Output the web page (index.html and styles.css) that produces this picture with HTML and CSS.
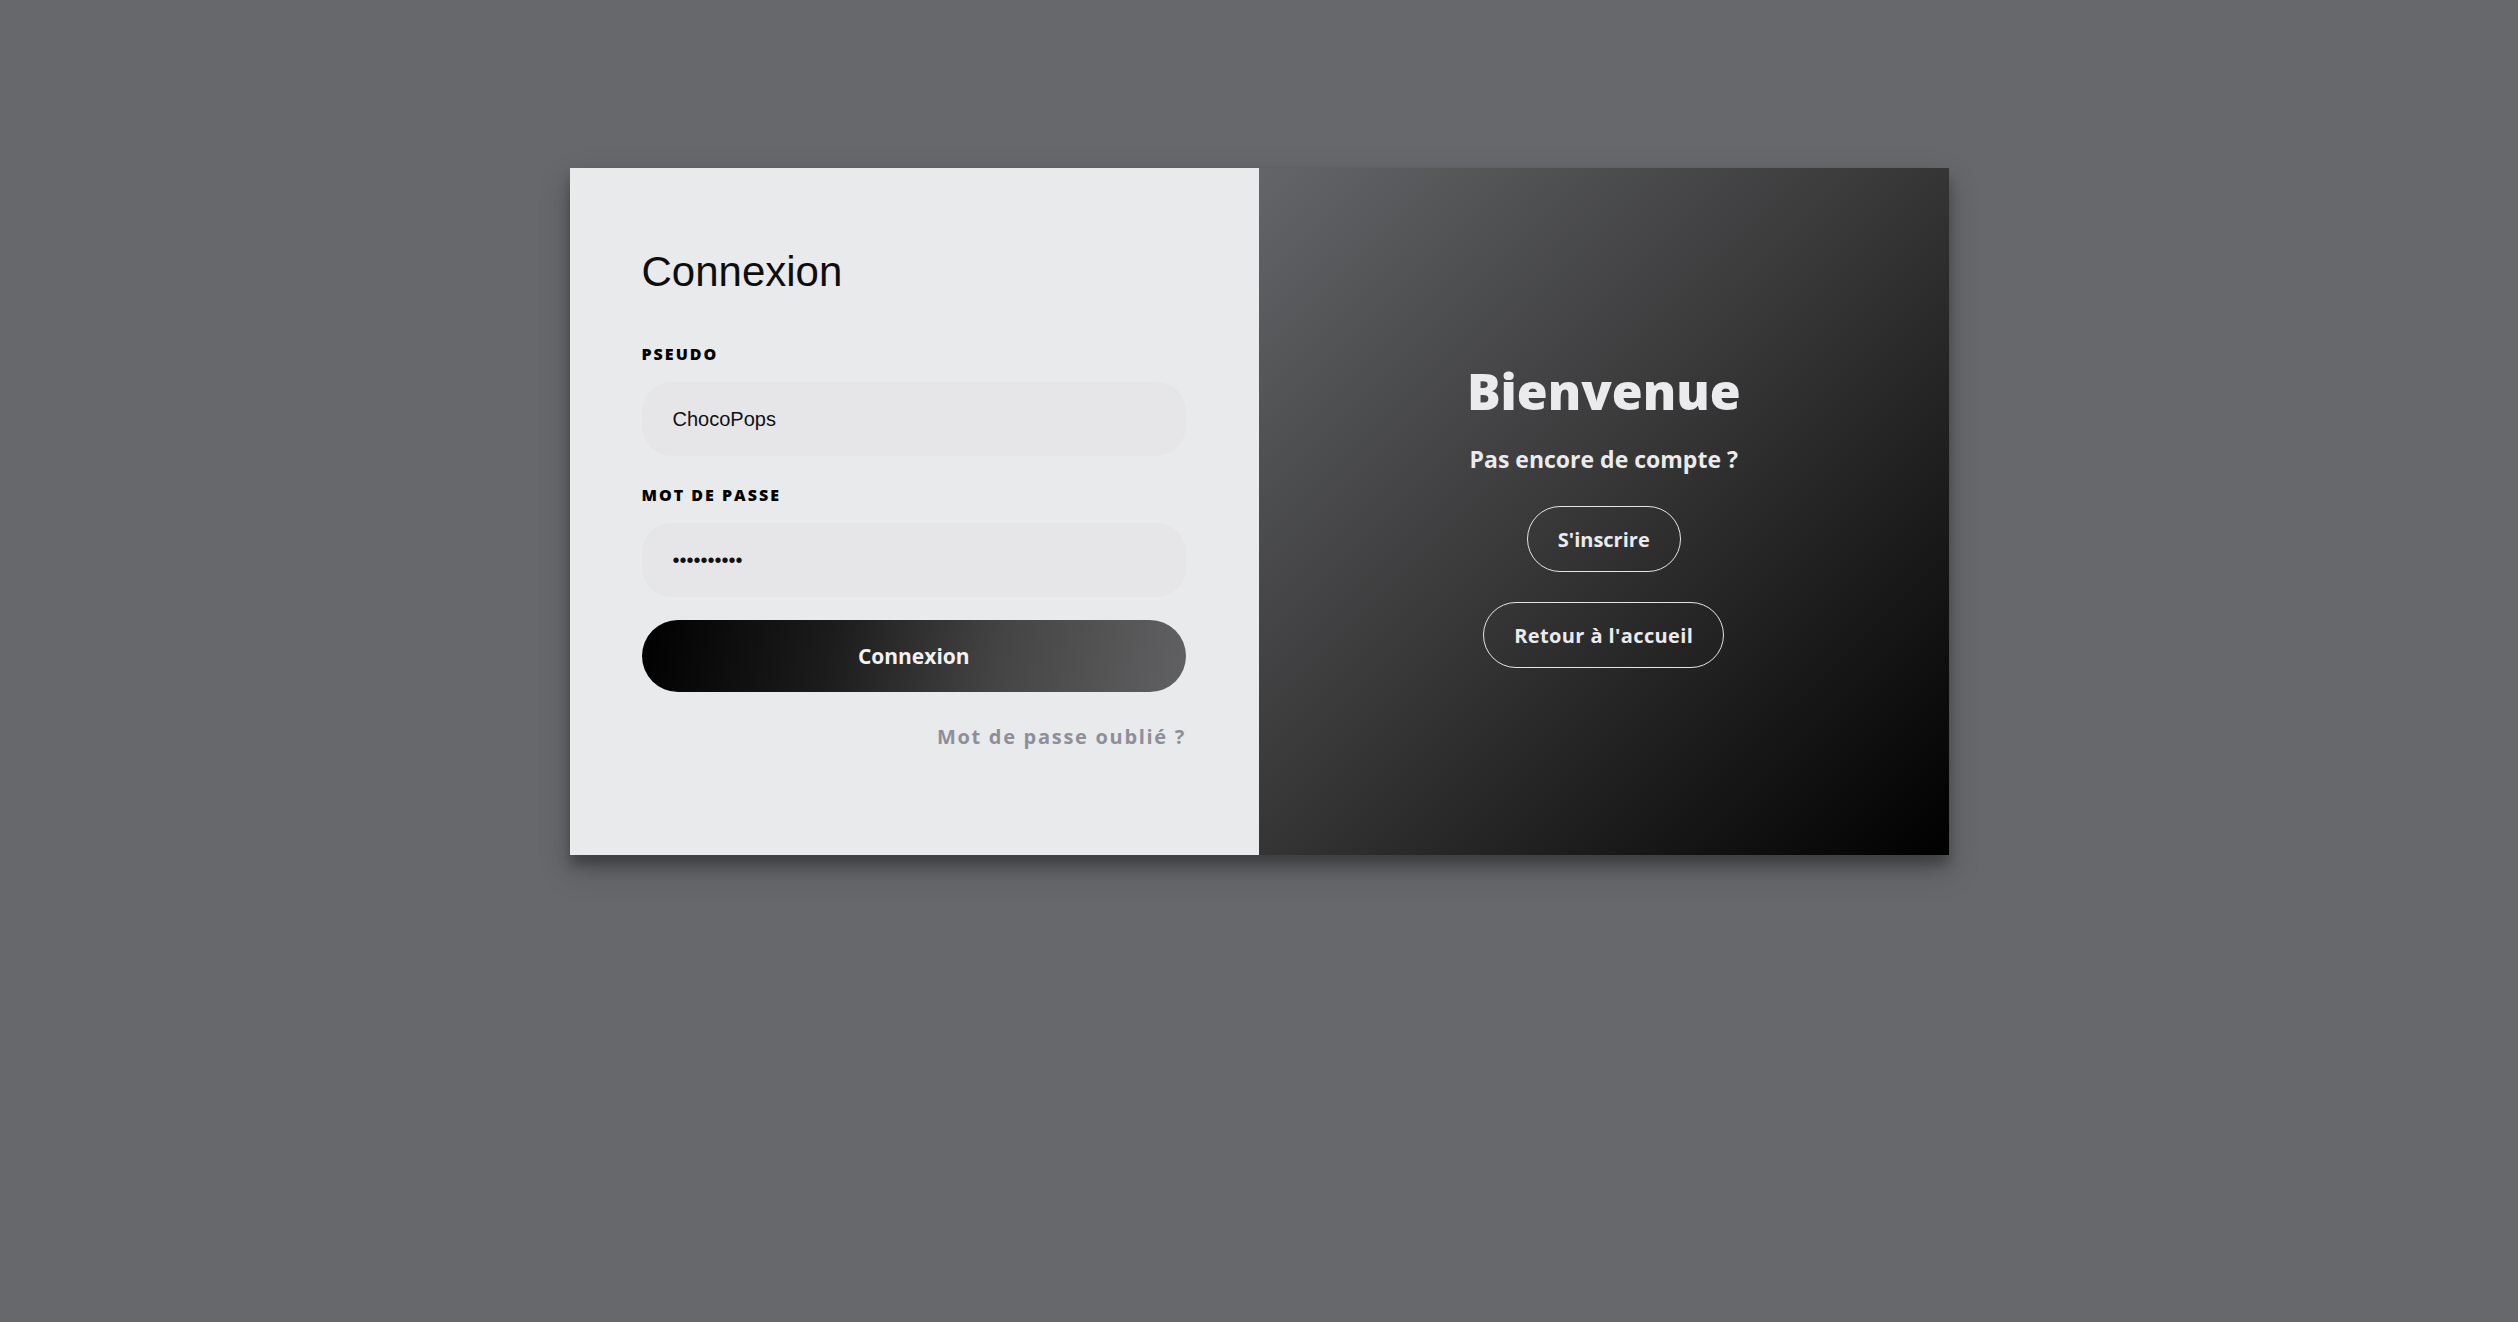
FILE: index.html
```html
<!DOCTYPE html>
<html lang="fr">
<head>
<meta charset="utf-8">
<title>Connexion</title>
<link rel="stylesheet" href="styles.css">
</head>
<body>
<div class="card">
  <form class="panel panel-login">
    <h1 class="title">Connexion</h1>
    <label class="label" for="pseudo">PSEUDO</label>
    <input class="field" id="pseudo" type="text" value="ChocoPops">
    <label class="label label-second" for="pass">MOT DE PASSE</label>
    <input class="field" id="pass" type="password" value="chocopops1">
    <button class="btn-primary" type="button">Connexion</button>
    <a class="forgot" href="#">Mot de passe oublié ?</a>
  </form>
  <section class="panel panel-welcome">
    <h2 class="welcome">Bienvenue</h2>
    <p class="subtitle">Pas encore de compte ?</p>
    <a class="btn-ghost" href="#">S'inscrire</a>
    <a class="btn-ghost btn-home" href="#">Retour à l'accueil</a>
  </section>
</div>
</body>
</html>
```
FILE: styles.css
```css
html, body {
  margin: 0;
  padding: 0;
}

body {
  background: #67686c;
  min-height: 1322px;
  font-family: "Open Sans", "Liberation Sans", sans-serif;
}

.card {
  width: 1379px;
  height: 687px;
  margin: 168px auto 0;
  display: flex;
  box-shadow: 0 14px 28px rgba(0, 0, 0, 0.25), 0 10px 10px rgba(0, 0, 0, 0.22);
}

.panel {
  flex: 0 0 50%;
  min-width: 0;
  box-sizing: border-box;
  display: flex;
  flex-direction: column;
}

.panel-login {
  background: #e9eaec;
  padding: 80px 73px 0 72px;
}

.title {
  margin: 0;
  font-family: "Liberation Sans", Arial, sans-serif;
  font-weight: 400;
  font-size: 42px;
  line-height: 48px;
  color: #0e0e0e;
}

.label {
  margin: 48px 0 18px;
  font-family: "Open Sans", sans-serif;
  font-weight: 800;
  font-size: 16px;
  line-height: 20px;
  letter-spacing: 2px;
  color: #000;
}

.label-second {
  margin-top: 29px;
}

.field {
  box-sizing: border-box;
  width: 100%;
  min-width: 0;
  height: 74px;
  margin: 0;
  padding: 0 20px 0 31px;
  border: none;
  outline: none;
  border-radius: 30px;
  background: #e6e6e8;
  font-family: "Liberation Sans", Arial, sans-serif;
  font-size: 20px;
  color: #111;
}

.btn-primary {
  margin-top: 23px;
  height: 72px;
  width: 100%;
  border: none;
  border-radius: 36px;
  background: linear-gradient(100deg, #000 0%, #1c1c1c 35%, #444 65%, #616163 100%);
  color: #f2f2f4;
  font-family: "Open Sans", sans-serif;
  font-weight: 700;
  font-size: 21px;
  cursor: pointer;
}

.forgot {
  align-self: flex-end;
  margin-top: 33px;
  font-family: "Open Sans", sans-serif;
  font-weight: 700;
  font-size: 20px;
  line-height: 24px;
  letter-spacing: 1.7px;
  color: #8e8f99;
  text-decoration: none;
}

.panel-welcome {
  background: linear-gradient(to bottom right, #646568 0%, #3a3a3b 45%, #1a1a1a 75%, #000 100%);
  align-items: center;
  justify-content: center;
  padding-top: 6px;
  color: #ebebed;
}

.welcome {
  margin: 0;
  font-family: "Open Sans", sans-serif;
  font-weight: 800;
  font-size: 50px;
  line-height: 60px;
}

.subtitle {
  margin: 24px 0 0;
  font-family: "Open Sans", sans-serif;
  font-weight: 700;
  font-size: 23px;
  line-height: 28px;
}

.btn-ghost {
  box-sizing: border-box;
  margin-top: 33px;
  height: 66px;
  padding: 0 30px;
  display: flex;
  align-items: center;
  border: 1.5px solid #e4e4e6;
  border-radius: 33px;
  color: #ebebed;
  text-decoration: none;
  font-family: "Open Sans", sans-serif;
  font-weight: 700;
  font-size: 20px;
}

.btn-home {
  margin-top: 30px;
  letter-spacing: 0.4px;
}
```
